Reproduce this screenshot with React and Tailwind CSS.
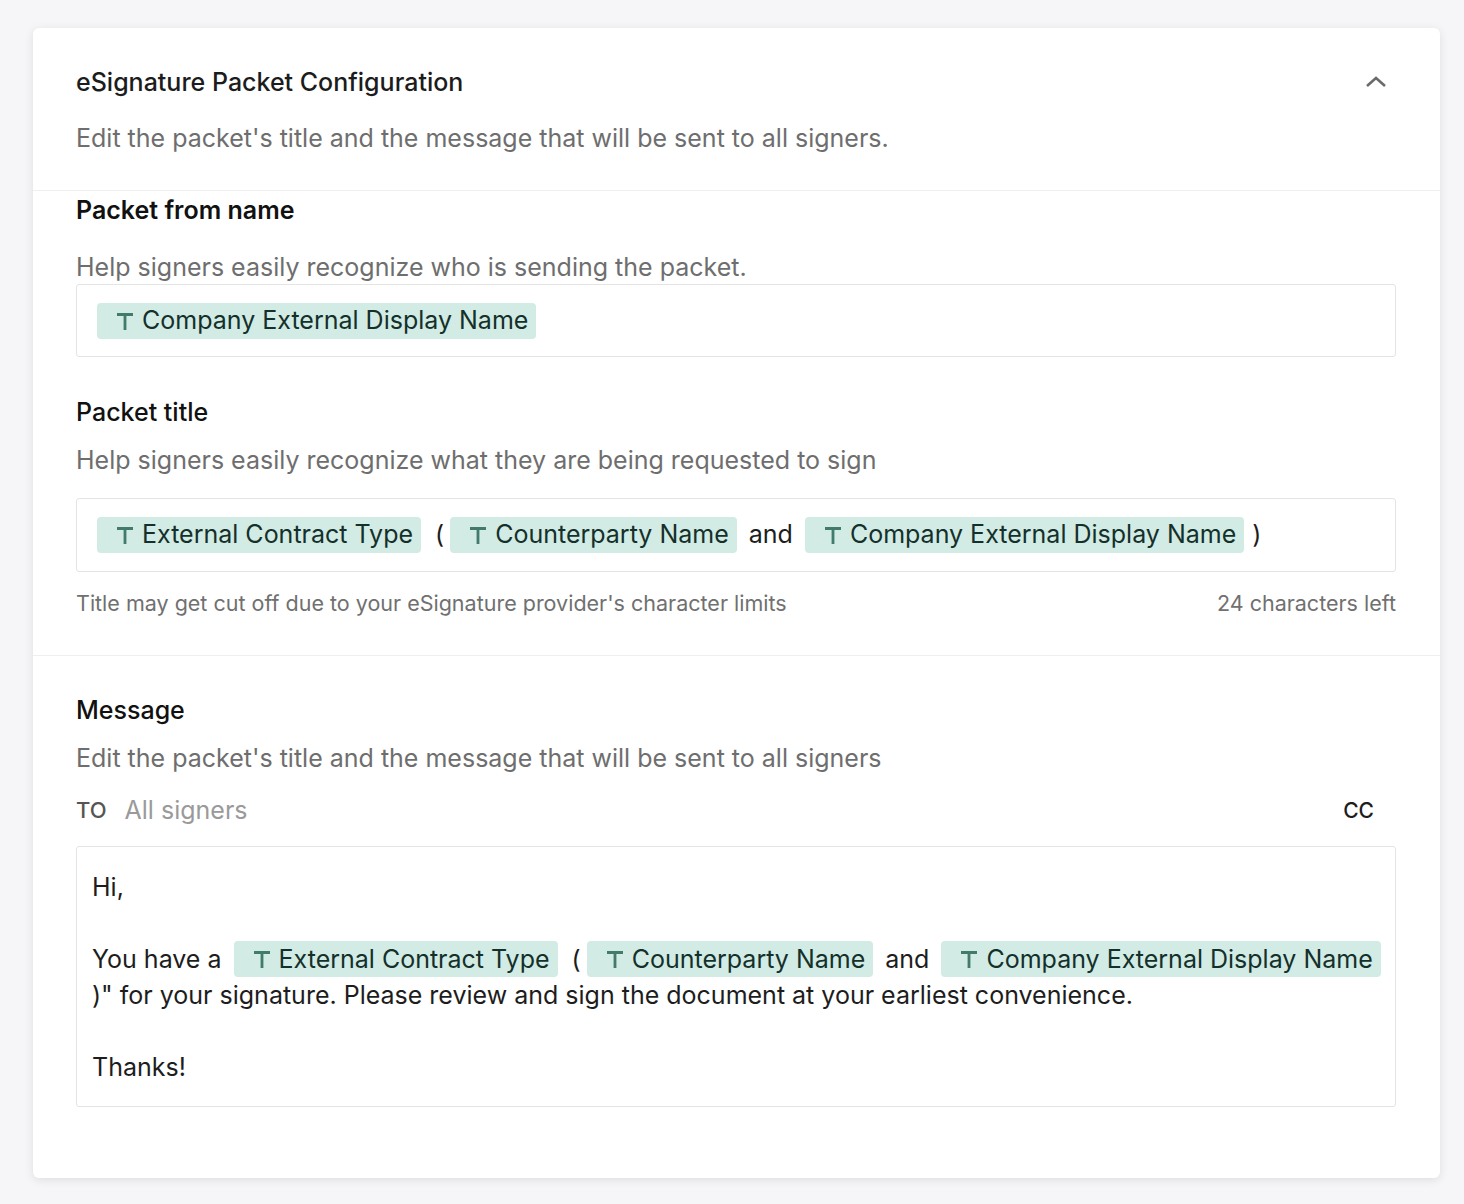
import React from "react";

const TIcon = () => (
  <svg width="18" height="20" viewBox="0 0 18 20" className="shrink-0">
    <path d="M1 3.5h16M9 3.5v15.5" stroke="#417b6c" strokeWidth="2.8" fill="none" />
  </svg>
);

const Chip = ({ label }) => (
  <span className="inline-flex items-center gap-[8px] h-[36px] pl-[19px] pr-[8px] rounded-[4px] bg-[#d2ebe5] text-[#14302a] whitespace-nowrap">
    <TIcon />
    <span>{label}</span>
  </span>
);

export default function App() {
  return (
    <div
      className="min-h-[1204px] bg-[#f6f6f8] pt-[28px] pl-[33px] pr-[24px]"
      style={{ fontFamily: "Inter, 'Noto Sans', sans-serif" }}
    >
      <div className="bg-white rounded-[6px] shadow-[0_2px_10px_rgba(0,0,0,0.10)] h-[1150px]">
        {/* header */}
        <div className="pl-[43px] pr-[44px] pt-[38px] pb-[36px] border-b border-[#efefef]">
          <div className="flex items-center justify-between">
            <h2 className="text-[25px] font-medium text-[#1c1c1c] leading-[32px]">
              eSignature Packet Configuration
            </h2>
            <svg width="24" height="16" viewBox="0 0 24 16" className="mr-[8px]">
              <path d="M3 12l9-8 9 8" stroke="#6b6b6b" strokeWidth="2.6" fill="none" />
            </svg>
          </div>
          <p className="mt-[24px] text-[25px] text-[#6e6e6e] leading-[32px]">
            Edit the packet's title and the message that will be sent to all signers.
          </p>
        </div>

        {/* from name + title */}
        <div className="pl-[43px] pr-[44px] pt-[3px] pb-[38px] border-b border-[#efefef]">
          <h3 className="text-[25px] font-semibold text-[#111] leading-[32px]">Packet from name</h3>
          <p className="mt-[25px] text-[25px] text-[#6e6e6e] leading-[32px]">
            Help signers easily recognize who is sending the packet.
          </p>
          <div className="mt-[1px] h-[73px] border border-[#e4e4e4] rounded-[3px] flex items-center pl-[20px] text-[25px]">
            <Chip label="Company External Display Name" />
          </div>

          <h3 className="mt-[39px] text-[25px] font-medium text-[#111] leading-[32px]">Packet title</h3>
          <p className="mt-[16px] text-[25px] text-[#6e6e6e] leading-[32px]">
            Help signers easily recognize what they are being requested to sign
          </p>
          <div className="mt-[22px] h-[74px] border border-[#e4e4e4] rounded-[3px] flex items-center pl-[20px] text-[25px] text-[#1d1d1d]">
            <Chip label="External Contract Type" />
            <span className="pl-[14px] pr-[6px]">(</span>
            <Chip label="Counterparty Name" />
            <span className="px-[12px]">and</span>
            <Chip label="Company External Display Name" />
            <span className="pl-[8px]">)</span>
          </div>
          <div className="mt-[17px] flex justify-between text-[21.5px] text-[#707070] leading-[28px]">
            <span>Title may get cut off due to your eSignature provider's character limits</span>
            <span>24 characters left</span>
          </div>
        </div>

        {/* message */}
        <div className="pl-[43px] pr-[44px] pt-[38px]">
          <h3 className="text-[25px] font-medium text-[#111] leading-[32px]">Message</h3>
          <p className="mt-[16px] text-[25px] text-[#6e6e6e] leading-[32px]">
            Edit the packet's title and the message that will be sent to all signers
          </p>
          <div className="mt-[18px] flex items-center justify-between pr-[22px]">
            <div className="flex items-center gap-[18px]">
              <span className="text-[22px] font-medium text-[#555]">TO</span>
              <span className="text-[25px] text-[#9a9a9a]">All signers</span>
            </div>
            <span className="text-[21px] font-medium text-[#1d1d1d]">CC</span>
          </div>
          <div className="mt-[16px] h-[261px] border border-[#e4e4e4] rounded-[3px] px-[15px] pt-[22px] text-[25px] text-[#1d1d1d] leading-[36px]">
            <p>Hi,</p>
            <div className="mt-[36px] flex items-center whitespace-nowrap">
              <span className="pr-[12px]">You have a</span>
              <Chip label="External Contract Type" />
              <span className="pl-[14px] pr-[6px]">(</span>
              <Chip label="Counterparty Name" />
              <span className="px-[12px]">and</span>
              <Chip label="Company External Display Name" />
            </div>
            <p>)" for your signature. Please review and sign the document at your earliest convenience.</p>
            <p className="mt-[36px]">Thanks!</p>
          </div>
        </div>
      </div>
    </div>
  );
}
